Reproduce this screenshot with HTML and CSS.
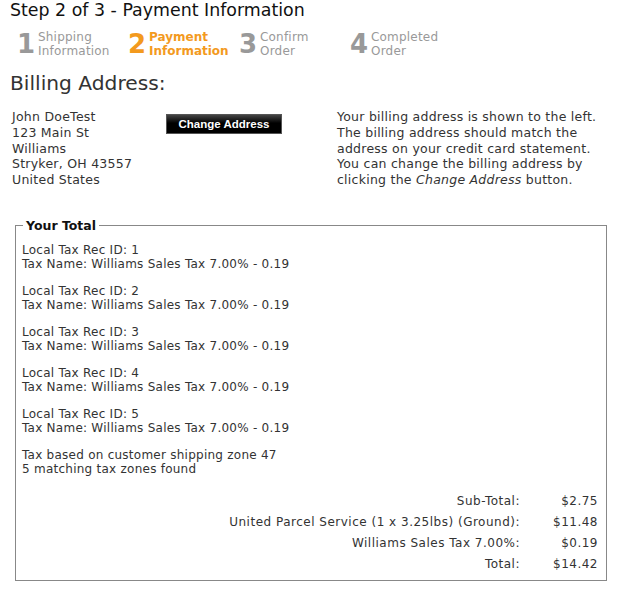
FILE: index.html
```html
<!DOCTYPE html>
<html lang="en">
<head>
  <meta charset="UTF-8">
  <title>Checkout - Payment Information</title>
  <link rel="stylesheet" href="styles.css">
</head>
<body>

  <h1>Step 2 of 3 - Payment Information</h1>

  <!-- progress steps -->
  <div class="steps">
    <div class="step"><span class="num">1</span><span class="label">Shipping<br>Information</span></div>
    <div class="step current"><span class="num">2</span><span class="label">Payment<br>Information</span></div>
    <div class="step"><span class="num">3</span><span class="label">Confirm<br>Order</span></div>
    <div class="step"><span class="num">4</span><span class="label">Completed<br>Order</span></div>
  </div>

  <h2>Billing Address:</h2>

  <div class="billing">
    <div class="address">
      John DoeTest<br>
      123 Main St<br>
      Williams<br>
      Stryker, OH 43557<br>
      United States
    </div>
    <div class="change"><button>Change Address</button></div>
    <div class="note">
      Your billing address is shown to the left.<br>
      The billing address should match the<br>
      address on your credit card statement.<br>
      You can change the billing address by<br>
      clicking the <em>Change Address</em> button.
    </div>
  </div>

  <fieldset class="total">
    <legend>Your Total</legend>
    <p>Local Tax Rec ID: 1<br>Tax Name: Williams Sales Tax 7.00% - 0.19</p>
    <p>Local Tax Rec ID: 2<br>Tax Name: Williams Sales Tax 7.00% - 0.19</p>
    <p>Local Tax Rec ID: 3<br>Tax Name: Williams Sales Tax 7.00% - 0.19</p>
    <p>Local Tax Rec ID: 4<br>Tax Name: Williams Sales Tax 7.00% - 0.19</p>
    <p>Local Tax Rec ID: 5<br>Tax Name: Williams Sales Tax 7.00% - 0.19</p>
    <p>Tax based on customer shipping zone 47<br>5 matching tax zones found</p>

    <table class="sums">
      <tr><td>Sub-Total:</td><td>$2.75</td></tr>
      <tr><td>United Parcel Service (1 x 3.25lbs) (Ground):</td><td>$11.48</td></tr>
      <tr><td>Williams Sales Tax 7.00%:</td><td>$0.19</td></tr>
      <tr><td>Total:</td><td>$14.42</td></tr>
    </table>
  </fieldset>

</body>
</html>
```

FILE: styles.css
```css
body { margin: 0; padding: 0 10px; font-family: "DejaVu Sans", Verdana, sans-serif; font-size: 12px; color: #333; background: #fff; }
h1 { margin: 0; font-size: 17.4px; font-weight: normal; line-height: 20px; color: #111; }

.steps { display: flex; margin: 10px 0 0 7px; height: 28px; }
.step { display: flex; align-items: center; width: 111px; color: #999; }
.step .num { font-size: 26px; font-weight: bold; line-height: 28px; width: 21px; color: #999; }
.step .label { font-size: 12px; line-height: 14px; letter-spacing: 0.2px; }
.step.current .num, .step.current .label { color: #f39a1e; font-weight: bold; }
.step.current .label { letter-spacing: 0; }

h2 { margin: 15px 0 0; font-size: 20.2px; font-weight: normal; line-height: 20px; color: #333; }

.billing { display: grid; grid-template-columns: 154px 171px 1fr; margin: 16px 0 0 2px; line-height: 15.75px; font-size: 12.5px; letter-spacing: 0.25px; }
.note { white-space: nowrap; }
.change button { margin-top: 5px; width: 116px; height: 20px; padding: 0; border: 1px solid #555; background: linear-gradient(#444, #000 45%, #000); color: #fff; font-family: "Liberation Sans", Arial, sans-serif; font-size: 11.5px; font-weight: bold; letter-spacing: 0; }

.total { margin: 30px 3px 0 5px; padding: 10px 8px 5px 6px; border: 1px solid #888; }
.total legend { margin-left: 1px; padding: 0 3px; font-size: 12.5px; font-weight: bold; color: #111; }
.total p { margin: 0 0 13px; line-height: 14px; font-size: 12px; letter-spacing: 0.25px; }
.total p:last-of-type { margin-bottom: 15px; }
.sums { margin: 0 0 0 auto; border-collapse: collapse; font-size: 12px; letter-spacing: 0.5px; }
.sums td { height: 21px; padding: 0; text-align: right; }
.sums td + td { width: 78px; }
```
